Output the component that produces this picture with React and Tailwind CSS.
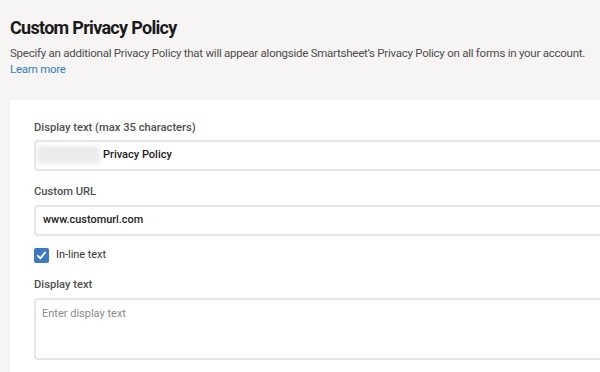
import React from "react";

export default function App() {
  return (
    <div className="w-[600px] h-[372px] overflow-hidden bg-[#f6f5f4] text-[#222]" style={{ fontFamily: "Roboto, 'Noto Sans', sans-serif" }}>
      <div className="pl-[10px] pt-[16px]">
        <h1 className="text-[18px] leading-[24px] font-bold tracking-[-0.7px] text-[#1a1a1a]">Custom Privacy Policy</h1>
        <p className="mt-[4.7px] text-[11.5px] leading-[16px] tracking-[-0.25px] text-[#4d4d4d] whitespace-nowrap">
          Specify an additional Privacy Policy that will appear alongside Smartsheet’s Privacy Policy on all forms in your account.
        </p>
        <a className="block text-[11.5px] leading-[16px] tracking-[-0.25px] text-[#2f7fc6]">Learn more</a>
      </div>
      <div className="ml-[10px] mt-[23.3px] bg-white h-[300px] pl-[24px] pt-[21px]">
        <label className="block text-[11.2px] leading-[14px] font-medium text-[#4f4f4f]">Display text (max 35 characters)</label>
        <div className="mt-[5px] h-[31px] border-2 border-r-0 border-[#e6e6e6] rounded-l-[4px] flex items-center pl-[1px]">
          <span className="w-[63px] h-[18px] bg-[#ebebeb] blur-[2px] rounded-sm"></span>
          <span className="ml-[3px] text-[11px] font-medium text-[#222]">Privacy Policy</span>
        </div>
        <label className="block mt-[14px] text-[11.2px] leading-[14px] font-medium text-[#4f4f4f]">Custom URL</label>
        <div className="mt-[6px] h-[31px] border-2 border-r-0 border-[#e6e6e6] rounded-l-[4px] flex items-center pl-[7px]">
          <span className="text-[10.9px] font-medium text-[#222]">www.customurl.com</span>
        </div>
        <div className="mt-[12px] h-[15px] flex items-center gap-[7px]">
          <span className="w-[15px] h-[15px] rounded-[2px] bg-[#3a78c3] flex items-center justify-center">
            <svg width="11" height="11" viewBox="0 0 12 12" fill="none">
              <path d="M2 6.3 L4.8 9.2 L10 2.6" stroke="white" strokeWidth="2" strokeLinecap="round" strokeLinejoin="round" />
            </svg>
          </span>
          <span className="text-[10.9px] leading-[14px] text-[#333]">In-line text</span>
        </div>
        <label className="block mt-[15px] text-[11.2px] leading-[14px] font-medium text-[#4f4f4f]">Display text</label>
        <div className="mt-[6px] h-[62px] border-2 border-r-0 border-[#e6e6e6] rounded-l-[4px] pl-[6px] pt-[7px]">
          <span className="block text-[11px] leading-[14px] text-[#8a8a8a]">Enter display text</span>
        </div>
      </div>
    </div>
  );
}
